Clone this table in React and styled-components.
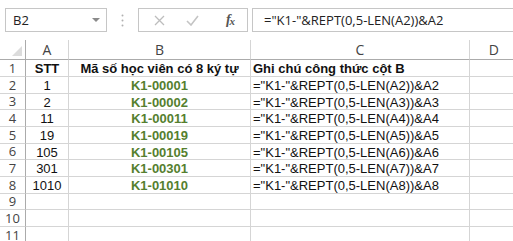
import React from "react";
import styled, { createGlobalStyle } from "styled-components";

const Global = createGlobalStyle`
  html, body { margin: 0; padding: 0; background: #fff; overflow: hidden; }
  * { box-sizing: border-box; }
`;

const Page = styled.div`
  width: 513px;
  height: 241px;
  overflow: hidden;
  background: #fff;
`;

const Bar = styled.div`
  display: flex;
  align-items: center;
  height: 40px;
  padding: 8px 0 8px 5px;
`;

const NameBox = styled.div`
  width: 102px;
  height: 24px;
  border: 1px solid #c6c6c6;
  display: flex;
  align-items: center;
  justify-content: space-between;
  padding: 0 6px 0 7px;
  font-family: "Open Sans", "Noto Sans", sans-serif;
  font-size: 13px;
  color: #222;
`;

const Caret = styled.span`
  width: 0;
  height: 0;
  border-left: 4px solid transparent;
  border-right: 4px solid transparent;
  border-top: 4px solid #8a8a8a;
`;

const Grip = styled.div`
  width: 31px;
  display: flex;
  justify-content: center;
`;

const ToolBox = styled.div`
  width: 110px;
  height: 24px;
  border: 1px solid #c6c6c6;
  display: flex;
  align-items: center;
  padding: 0 0 0 13px;
`;

const ToolIcon = styled.span`
  width: ${(p) => p.w}px;
  display: flex;
  align-items: center;
  justify-content: center;
`;

const Fx = styled.span`
  font-family: "Liberation Serif", "DejaVu Serif", serif;
  font-style: italic;
  font-weight: bold;
  font-size: 14px;
  color: #555;
  letter-spacing: -1px;
  & sub {
    font-size: 11px;
    vertical-align: -1px;
  }
`;

const FormulaInput = styled.div`
  flex: 1;
  height: 24px;
  margin-left: 4px;
  border: 1px solid #c6c6c6;
  border-right: none;
  display: flex;
  align-items: center;
  padding-left: 11px;
  font-family: "Open Sans", "Noto Sans", sans-serif;
  font-size: 13px;
  color: #222;
  white-space: nowrap;
`;

const Sheet = styled.div`
  display: grid;
  grid-template-columns: 26px 43px 182px 219px 44px;
  grid-template-rows: 20px 17px 17px 16px 17px 17px 16px 17px 17px 16px 17px 17px;
  font-family: "Liberation Sans", Arial, sans-serif;
`;

const Corner = styled.div`
  border-right: 1px solid #ababab;
  border-bottom: 1px solid #ababab;
  position: relative;
  &::after {
    content: "";
    position: absolute;
    right: 3px;
    bottom: 3px;
    width: 0;
    height: 0;
    border-left: 10px solid transparent;
    border-bottom: 10px solid #dcdcdc;
  }
`;

const ColHead = styled.div`
  border-right: 1px solid ${(p) => (p.last ? "transparent" : "#d5d5d5")};
  border-bottom: 1px solid #ababab;
  display: flex;
  align-items: center;
  justify-content: ${(p) => (p.right ? "flex-end" : "center")};
  padding-right: ${(p) => (p.right ? "14px" : "0")};
  padding-top: 1px;
  font-family: "Open Sans", "Noto Sans", sans-serif;
  font-size: 14px;
  line-height: 1;
  color: #444;
`;

const RowHead = styled.div`
  border-right: 1px solid #ababab;
  border-bottom: 1px solid #d5d5d5;
  display: flex;
  align-items: center;
  justify-content: center;
  font-family: "Open Sans", "Noto Sans", sans-serif;
  font-size: 13px;
  line-height: 1;
  color: #444;
`;

const Cell = styled.div`
  border-right: 1px solid #d5d5d5;
  border-bottom: 1px solid #d5d5d5;
  display: flex;
  align-items: center;
  justify-content: ${(p) => (p.align === "left" ? "flex-start" : "center")};
  padding-left: ${(p) => (p.align === "left" ? "2px" : "0")};
  padding-top: 1px;
  font-size: 13px;
  line-height: 1;
  font-weight: ${(p) => (p.bold ? "bold" : "normal")};
  color: ${(p) => (p.green ? "#557f2f" : "#111")};
  white-space: nowrap;
`;

const ids = [1, 2, 11, 19, 105, 301, 1010];
const code = (n) => "K1-" + String(n).padStart(5, "0");
const formula = (r) => `="K1-"&REPT(0,5-LEN(A${r}))&A${r}`;

export default function App() {
  const rows = [];
  rows.push(
    <React.Fragment key="r1">
      <RowHead>1</RowHead>
      <Cell bold>STT</Cell>
      <Cell bold>Mã số học viên có 8 ký tự</Cell>
      <Cell bold align="left">Ghi chú công thức cột B</Cell>
      <Cell />
    </React.Fragment>
  );
  ids.forEach((n, i) => {
    const r = i + 2;
    rows.push(
      <React.Fragment key={r}>
        <RowHead>{r}</RowHead>
        <Cell>{n}</Cell>
        <Cell bold green>{code(n)}</Cell>
        <Cell align="left">{formula(r)}</Cell>
        <Cell />
      </React.Fragment>
    );
  });
  [9, 10, 11].forEach((r) => {
    rows.push(
      <React.Fragment key={r}>
        <RowHead>{r}</RowHead>
        <Cell />
        <Cell />
        <Cell />
        <Cell />
      </React.Fragment>
    );
  });

  return (
    <Page>
      <Global />
      <Bar>
        <NameBox>
          <span>B2</span>
          <Caret />
        </NameBox>
        <Grip>
          <svg width="3" height="13" viewBox="0 0 3 13">
            <circle cx="1.5" cy="1.5" r="1" fill="#b0b0b0" />
            <circle cx="1.5" cy="6.5" r="1" fill="#b0b0b0" />
            <circle cx="1.5" cy="11.5" r="1" fill="#b0b0b0" />
          </svg>
        </Grip>
        <ToolBox>
          <ToolIcon w={14}>
            <svg width="11" height="11" viewBox="0 0 11 11">
              <path d="M1 1 L10 10 M10 1 L1 10" stroke="#bdbdbd" strokeWidth="1.3" fill="none" />
            </svg>
          </ToolIcon>
          <ToolIcon w={52}>
            <svg width="13" height="11" viewBox="0 0 13 11">
              <path d="M1 6 L5 10 L12 1" stroke="#c4c4c4" strokeWidth="1.6" fill="none" />
            </svg>
          </ToolIcon>
          <ToolIcon w={24}>
            <Fx>f<sub>x</sub></Fx>
          </ToolIcon>
        </ToolBox>
        <FormulaInput>{formula(2)}</FormulaInput>
      </Bar>
      <Sheet>
        <Corner />
        <ColHead>A</ColHead>
        <ColHead>B</ColHead>
        <ColHead>C</ColHead>
        <ColHead last right>D</ColHead>
        {rows}
      </Sheet>
    </Page>
  );
}
